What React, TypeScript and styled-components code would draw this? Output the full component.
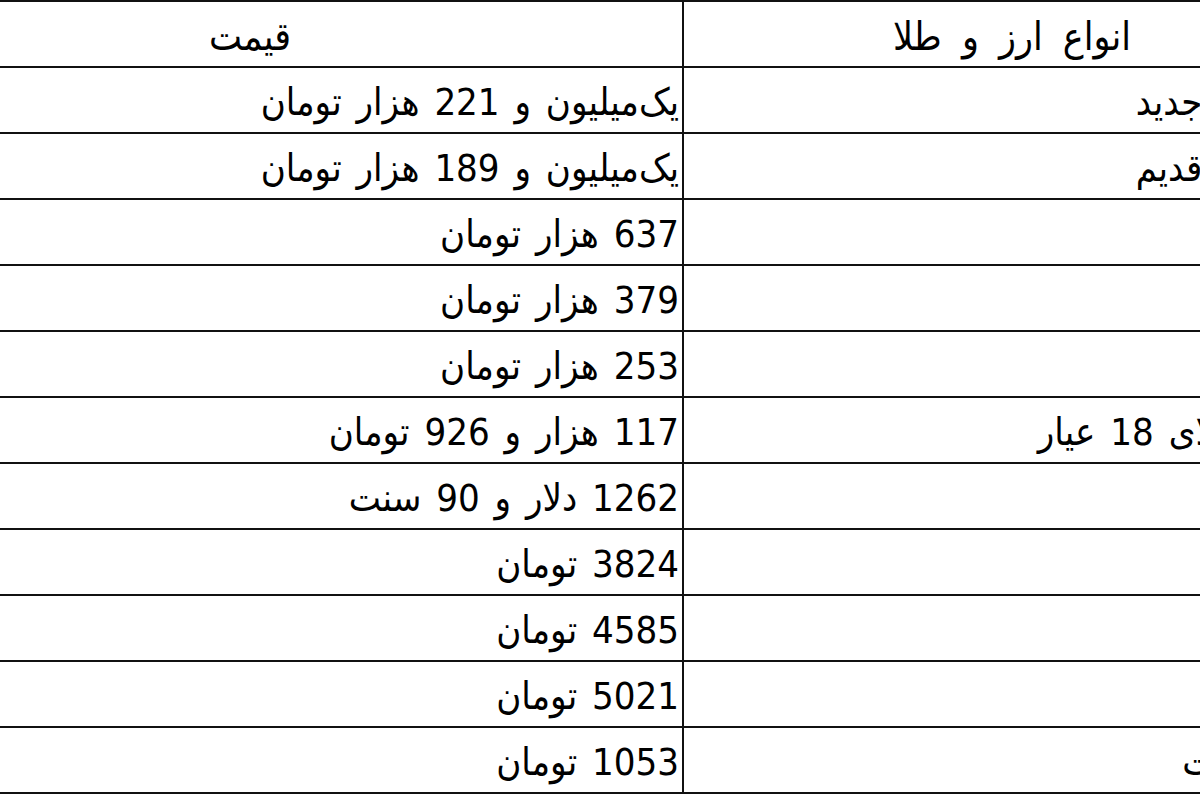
import React from 'react'
import styled, { createGlobalStyle } from 'styled-components'

const GlobalStyle = createGlobalStyle`
  html, body {
    margin: 0;
    padding: 0;
    background: #fff;
    overflow: hidden;
  }
  body {
    width: 1200px;
    height: 800px;
  }
`

const Viewport = styled.div`
  width: 1200px;
  height: 800px;
  overflow: hidden;
  background: #fff;
`

// the screenshot is a crop of a wider table, so it overflows on both sides
const PriceTable = styled.table`
  direction: rtl;
  border-collapse: separate;
  border-spacing: 0;
  table-layout: fixed;
  margin-left: -184px;
  width: 1553px;
  border-top: 2px solid #111;
  font-family: 'DejaVu Sans Condensed', 'DejaVu Sans', sans-serif;
  font-size: 38px;
  color: #000;
`

const Cell = styled.td`
  border-bottom: 2px solid #111;
  border-left: 2px solid #111;
  height: 66px;
  padding: 4px 3px 0;
  box-sizing: border-box;
  text-align: right;
  font-weight: normal;
  vertical-align: middle;
  white-space: nowrap;
  overflow: hidden;
  line-height: 1;
  word-spacing: 4px;
`

const HeadCell = styled(Cell).attrs({ as: 'th' })<{ $shift?: number }>`
  text-align: center;
  font-size: 39px;
  word-spacing: 9px;
  padding-right: ${p => (p.$shift ?? 0) + 3}px;
`

const rows: [string, string][] = [
  ['سکه طرح جدید', 'یک‌میلیون و 221 هزار تومان'],
  ['سکه طرح قدیم', 'یک‌میلیون و 189 هزار تومان'],
  ['نیم سکه', '637 هزار تومان'],
  ['ربع سکه', '379 هزار تومان'],
  ['سکه گرمی', '253 هزار تومان'],
  ['هر گرم طلای 18 عیار', '117 هزار و 926 تومان'],
  ['انس طلا', '1262 دلار و 90 سنت'],
  ['دلار', '3824 تومان'],
  ['یورو', '4585 تومان'],
  ['پوند', '5021 تومان'],
  ['درهم امارات', '1053 تومان'],
]

export default function App() {
  return (
    <>
      <GlobalStyle />
      <Viewport>
        <PriceTable>
          <colgroup>
            <col style={{ width: 687 }} />
            <col style={{ width: 866 }} />
          </colgroup>
          <thead>
            <tr>
              <HeadCell $shift={29}>انواع ارز و طلا</HeadCell>
              <HeadCell>قیمت</HeadCell>
            </tr>
          </thead>
          <tbody>
            {rows.map(([name, price]) => (
              <tr key={name}>
                <Cell>{name}</Cell>
                <Cell>{price}</Cell>
              </tr>
            ))}
          </tbody>
        </PriceTable>
      </Viewport>
    </>
  )
}
